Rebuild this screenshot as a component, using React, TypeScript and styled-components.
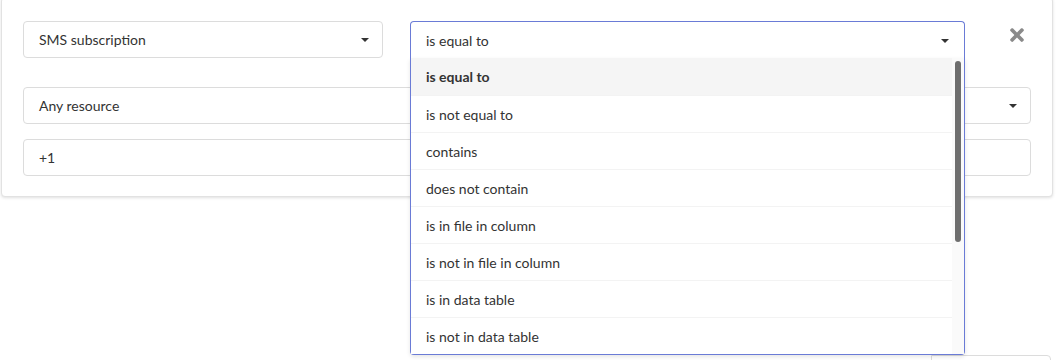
import * as React from "react";
import styled, { createGlobalStyle } from "styled-components";
import { FaTimes } from "react-icons/fa";

const GlobalStyle = createGlobalStyle`
  html, body {
    margin: 0;
    padding: 0;
    background: #ffffff;
    overflow: hidden;
  }
  body {
    font-family: Lato, "Liberation Sans", sans-serif;
    font-size: 14px;
    color: #333333;
  }
`;

const OPTIONS = [
  "is equal to",
  "is not equal to",
  "contains",
  "does not contain",
  "is in file in column",
  "is not in file in column",
  "is in data table",
  "is not in data table",
];

const Page = styled.div`
  width: 1056px;
  height: 360px;
  overflow: hidden;
`;

const Card = styled.div`
  margin: -3px 3px 0 1px;
  padding: 23px 21px 20px 21px;
  border: 1px solid #e2e2e2;
  border-radius: 4px;
  box-shadow: 0 1px 3px rgba(0, 0, 0, 0.12);
  background: #ffffff;
  display: flex;
  flex-direction: column;
`;

const TopRow = styled.div`
  display: flex;
  align-items: flex-start;
  height: 37px;
  margin-bottom: 29px;
`;

const Field = styled.div<{ width?: number }>`
  box-sizing: border-box;
  height: 37px;
  ${props => (props.width ? `width: ${props.width}px;` : `flex: 1;`)}
  border: 1px solid #dcdcdc;
  border-radius: 4px;
  display: flex;
  align-items: center;
  padding: 0 13px 0 15px;
  background: #ffffff;
`;

const FieldText = styled.span`
  flex: 1;
  white-space: nowrap;
`;

const Caret = styled.span`
  width: 0;
  height: 0;
  border-left: 4px solid transparent;
  border-right: 4px solid transparent;
  border-top: 4px solid #333333;
  margin-top: 1px;
`;

const OpenSelect = styled.div`
  position: relative;
  width: 555px;
  margin-left: 27px;
  z-index: 2;
`;

const OpenHead = styled.div`
  box-sizing: border-box;
  height: 37px;
  border: 1px solid #6a7bd6;
  border-bottom: none;
  border-radius: 4px 4px 0 0;
  display: flex;
  align-items: center;
  padding: 0 15px 0 15px;
  background: #ffffff;
`;

const Menu = styled.div`
  position: absolute;
  top: 37px;
  left: 0;
  right: 0;
  box-sizing: border-box;
  border: 1px solid #6a7bd6;
  border-top: none;
  border-radius: 0 0 4px 4px;
  background: #ffffff;
  box-shadow: 0 2px 4px rgba(0, 0, 0, 0.1);
  display: flex;
`;

const OptionList = styled.ul`
  list-style: none;
  margin: 0;
  padding: 0;
  flex: 1;
`;

const Option = styled.li<{ active?: boolean }>`
  box-sizing: border-box;
  height: 37px;
  display: flex;
  align-items: center;
  padding: 0 15px;
  border-top: 1px solid ${props => (props.active ? "transparent" : "#f3f3f3")};
  background: ${props => (props.active ? "#f5f5f5" : "#ffffff")};
  font-weight: ${props => (props.active ? 700 : 400)};
  &:first-child {
    border-top: none;
  }
`;

const ScrollTrack = styled.div`
  width: 12px;
  background: #fafafa;
  display: flex;
  justify-content: center;
  padding-top: 3px;
`;

const ScrollThumb = styled.div`
  width: 6px;
  height: 181px;
  border-radius: 3px;
  background: #6e6e6e;
`;

const CloseArea = styled.div`
  flex: 1;
  display: flex;
  justify-content: flex-end;
  padding: 4px 4px 0 0;
  color: #8a8a8a;
  font-size: 20px;
`;

const WideRow = styled.div<{ gap?: number }>`
  display: flex;
  margin-bottom: ${props => props.gap ?? 0}px;
`;

const Footer = styled.div`
  display: flex;
  justify-content: flex-end;
  margin: 158px 5px 0 0;
`;

const FooterBox = styled.div`
  width: 118px;
  height: 20px;
  border: 1px solid #dcdcdc;
  border-radius: 0 4px 0 0;
`;

export default function App() {
  return (
    <Page>
      <GlobalStyle />
      <Card>
        <TopRow>
          <Field width={360}>
            <FieldText>SMS subscription</FieldText>
            <Caret />
          </Field>
          <OpenSelect>
            <OpenHead>
              <FieldText>is equal to</FieldText>
              <Caret />
            </OpenHead>
            <Menu>
              <OptionList>
                {OPTIONS.map((opt, i) => (
                  <Option key={opt} active={i === 0}>
                    {opt}
                  </Option>
                ))}
              </OptionList>
              <ScrollTrack>
                <ScrollThumb />
              </ScrollTrack>
            </Menu>
          </OpenSelect>
          <CloseArea>
            <FaTimes />
          </CloseArea>
        </TopRow>
        <WideRow gap={15}>
          <Field>
            <FieldText>Any resource</FieldText>
            <Caret />
          </Field>
        </WideRow>
        <WideRow>
          <Field>
            <FieldText>+1</FieldText>
          </Field>
        </WideRow>
      </Card>
      <Footer>
        <FooterBox />
      </Footer>
    </Page>
  );
}
